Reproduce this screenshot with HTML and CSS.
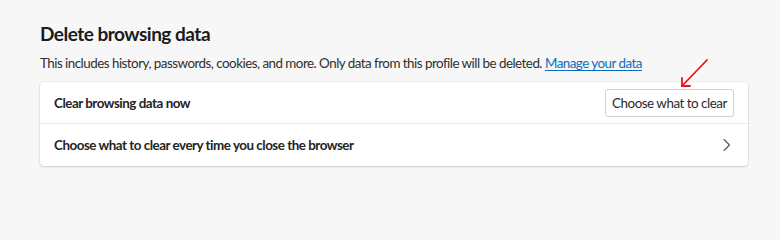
FILE: index.html
```html
<!DOCTYPE html>
<html lang="en">
<head>
<meta charset="utf-8">
<title>Delete browsing data</title>
<link rel="stylesheet" href="styles.css">
</head>
<body>
<main class="page">
  <h1 class="title">Delete browsing data</h1>
  <p class="desc">This includes history, passwords, cookies, and more. Only data from this profile will be deleted. <a class="link" href="#">Manage your data</a></p>
  <section class="card">
    <div class="row row-first">
      <span class="row-label">Clear browsing data now</span>
      <button class="btn" type="button">Choose what to clear</button>
    </div>
    <div class="row">
      <span class="row-label">Choose what to clear every time you close the browser</span>
      <svg class="chev" width="16" height="16" viewBox="0 0 16 16" aria-hidden="true">
        <path d="M6 2.5 L11.5 8 L6 13.5" fill="none" stroke="#555" stroke-width="1.1" stroke-linecap="round" stroke-linejoin="round"/>
      </svg>
    </div>
  </section>
  <svg class="annot" width="34" height="34" viewBox="0 0 34 34" aria-hidden="true">
    <path d="M30 2 L5 28" fill="none" stroke="#e5161b" stroke-width="1.8" stroke-linecap="round"/>
    <path d="M5 20 L5 28 L13 28" fill="none" stroke="#e5161b" stroke-width="1.8" stroke-linecap="round" stroke-linejoin="round"/>
  </svg>
</main>
</body>
</html>
```
FILE: styles.css
```css
html, body {
  margin: 0;
  padding: 0;
  background: #f7f7f7;
}
body {
  font-family: Lato, "Open Sans", Arial, sans-serif;
  color: #2b2b2b;
  width: 780px;
  height: 205px;
  overflow: hidden;
}
.page {
  position: relative;
  padding: 20px 32px 0 40px;
}
.title {
  margin: 0;
  font-size: 19px;
  line-height: 28px;
  font-weight: 700;
  color: #1b1b1b;
  letter-spacing: -0.5px;
}
.desc {
  margin: 5px 0 0;
  font-size: 13.4px;
  line-height: 20px;
  color: #2f2f2f;
  letter-spacing: -0.52px;
}
.link {
  color: #0f6cbd;
  text-decoration: underline;
  text-underline-offset: 2px;
}
.card {
  margin-top: 9px;
  width: 708px;
  background: #fff;
  border-radius: 4px;
  box-shadow: 0 0 0 1px rgba(0,0,0,0.04), 0 1px 2px rgba(0,0,0,0.14);
}
.row {
  display: flex;
  align-items: center;
  justify-content: space-between;
  height: 42px;
  padding: 0 14px;
  box-sizing: border-box;
}
.row-first {
  border-bottom: 1px solid #ebebeb;
}
.row-label {
  font-size: 13.4px;
  line-height: 20px;
  font-weight: 700;
  color: #242424;
  letter-spacing: -0.48px;
}
.btn {
  font-family: inherit;
  font-size: 13.4px;
  line-height: 20px;
  color: #2b2b2b;
  background: #fff;
  border: 1px solid #d1d1d1;
  border-radius: 3px;
  width: 129px;
  height: 28px;
  padding: 0;
  white-space: nowrap;
  letter-spacing: -0.48px;
}
.chev {
  display: block;
}
.annot {
  position: absolute;
  left: 677px;
  top: 58px;
}
```
